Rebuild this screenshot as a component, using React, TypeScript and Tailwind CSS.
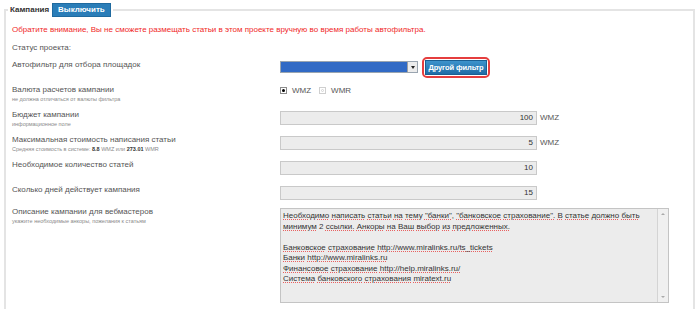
import React from "react";

// spell-check style underline under each word
const Spelled = ({ text }: { text: string }) => {
  const parts = text.split(" ");
  return (
    <>
      {parts.map((w, i) => (
        <React.Fragment key={i}>
          {/^\d+$/.test(w) ? (
            w
          ) : (
            <span className="underline decoration-dotted decoration-[#e86060] underline-offset-[1px]">{w}</span>
          )}
          {i < parts.length - 1 ? " " : ""}
        </React.Fragment>
      ))}
    </>
  );
};

const Input = ({ value }: { value: string }) => (
  <div className="w-[257px] h-[14px] bg-[#ececec] border border-[#c9c9c9] text-right pr-[3px] leading-[12px] text-[#333]">
    {value}
  </div>
);

const Label = ({ title, note }: { title: string; note?: React.ReactNode }) => (
  <div className="w-[268px] shrink-0">
    <div className="leading-[10px]">{title}</div>
    {note && <div className="text-[5.5px] leading-[8px] text-[#8a8a8a] whitespace-nowrap">{note}</div>}
  </div>
);

export default function App() {
  const description = [
    'Необходимо написать статьи на тему "банки", "банковское страхование". В статье должно быть',
    "минимум 2 ссылки. Анкоры на Ваш выбор из предложенных.",
    "",
    "Банковское страхование http://www.miralinks.ru/ts_tickets",
    "Банки http://www.miralinks.ru",
    "Финансовое страхование http://help.miralinks.ru/",
    "Система банковского страхования miratext.ru",
  ];

  return (
    <div className="w-[700px] h-[309px] overflow-hidden bg-white font-['Liberation_Sans',Arial,sans-serif] text-[8px] text-[#555] pt-[3px] pl-[4px]">
      <fieldset className="w-[691px] border-2 border-[#e4e4e4] pb-[20px]">
        <legend className="ml-[2px] px-[2px]">
          <div className="flex items-center gap-[3px]">
            <span className="font-bold text-[#333] leading-[10px]">Кампания</span>
            <span className="h-[14px] px-[5px] flex items-center bg-[#2a7db8] text-white font-bold border border-[#1f6a9f]">
              Выключить
            </span>
          </div>
        </legend>

        <div className="pl-[6px] pt-[8px]">
          <div className="leading-[10px] text-[#f02828]">
            Обратите внимание, Вы не сможете размещать статьи в этом проекте вручную во время работы автофильтра.
          </div>

          <div className="mt-[8px] leading-[10px]">Статус проекта:</div>

          {/* Autofilter */}
          <div className="flex mt-[4px] h-[28px]">
            <div className="w-[268px] shrink-0 mt-[3px] leading-[10px]">Автофильтр для отбора площадок</div>
            <div className="flex items-start">
              <div className="mt-[4px] w-[138px] h-[12px] flex border border-[#9aa5b0] bg-[#316ac5]">
                <div className="flex-1" />
                <div className="w-[10px] h-full bg-[#ececec] border-l border-[#a0a0a0] flex items-center justify-center">
                  <div className="w-0 h-0 border-l-[2.5px] border-r-[2.5px] border-t-[3px] border-l-transparent border-r-transparent border-t-[#222]" />
                </div>
              </div>
              <div className="ml-[4px] w-[68px] h-[21px] border-2 border-[#e53e3e] rounded-[5px] p-px bg-white">
                <div className="h-full flex items-center justify-center bg-gradient-to-b from-[#3d93cc] to-[#1f6ca6] border border-[#1b5f92] text-white font-bold text-[7.5px] whitespace-nowrap tracking-[-0.1px] leading-[10px]">
                  Другой фильтр
                </div>
              </div>
            </div>
          </div>

          {/* Currency */}
          <div className="flex h-[25px]">
            <Label title="Валюта расчетов кампании" note="не должна отличаться от валюты фильтра" />
            <div className="flex items-center mt-[2px] h-[7px]">
              <div className="w-[7px] h-[7px] border border-[#8c8c8c] bg-white flex items-center justify-center">
                <div className="w-[3px] h-[3px] rounded-full bg-black" />
              </div>
              <span className="ml-[5px] leading-[10px]">WMZ</span>
              <div className="ml-[8px] w-[7px] h-[7px] border border-[#cfcfcf] bg-white flex items-center justify-center">
                <div className="w-[3px] h-[3px] rounded-full border border-[#d4d4d4]" />
              </div>
              <span className="ml-[5px] leading-[10px]">WMR</span>
            </div>
          </div>

          {/* Budget */}
          <div className="flex h-[25px]">
            <Label title="Бюджет кампании" note="информационное поле" />
            <div className="flex items-start mt-[1px]">
              <Input value="100" />
              <span className="ml-[3px] leading-[14px]">WMZ</span>
            </div>
          </div>

          {/* Max cost */}
          <div className="flex h-[25px]">
            <Label
              title="Максимальная стоимость написания статьи"
              note={
                <>
                  Средняя стоимость в системе: <b className="text-[#333]">8.8</b> WMZ или{" "}
                  <b className="text-[#333]">273.01</b> WMR
                </>
              }
            />
            <div className="flex items-start mt-[1px]">
              <Input value="5" />
              <span className="ml-[3px] leading-[14px]">WMZ</span>
            </div>
          </div>

          <div className="flex h-[25px]">
            <Label title="Необходимое количество статей" />
            <div className="mt-[1px]">
              <Input value="10" />
            </div>
          </div>

          <div className="flex h-[22px]">
            <Label title="Сколько дней действует кампания" />
            <div className="mt-[1px]">
              <Input value="15" />
            </div>
          </div>

          {/* Description */}
          <div className="flex">
            <Label title="Описание кампании для вебмастеров" note="укажите необходимые анкоры, пожелания к статьям" />
            <div className="mt-[1px] w-[389px] h-[95px] flex bg-[#ececec] border border-[#c4c4c4]">
              <div className="flex-1 pl-[2px] pt-[2px] text-[#333] leading-[10.5px] whitespace-nowrap">
                {description.map((line, i) => (
                  <div key={i} className="h-[10.5px]">
                    <Spelled text={line} />
                  </div>
                ))}
              </div>
              <div className="w-[11px] h-full border-l border-[#d4d4d4] bg-[#f0f0f0] flex flex-col items-center justify-between py-[4px]">
                <div className="w-0 h-0 border-l-[2px] border-r-[2px] border-b-[2px] border-l-transparent border-r-transparent border-b-[#aaa]" />
                <div className="w-0 h-0 border-l-[2px] border-r-[2px] border-t-[2px] border-l-transparent border-r-transparent border-t-[#aaa]" />
              </div>
            </div>
          </div>
        </div>
      </fieldset>
    </div>
  );
}
